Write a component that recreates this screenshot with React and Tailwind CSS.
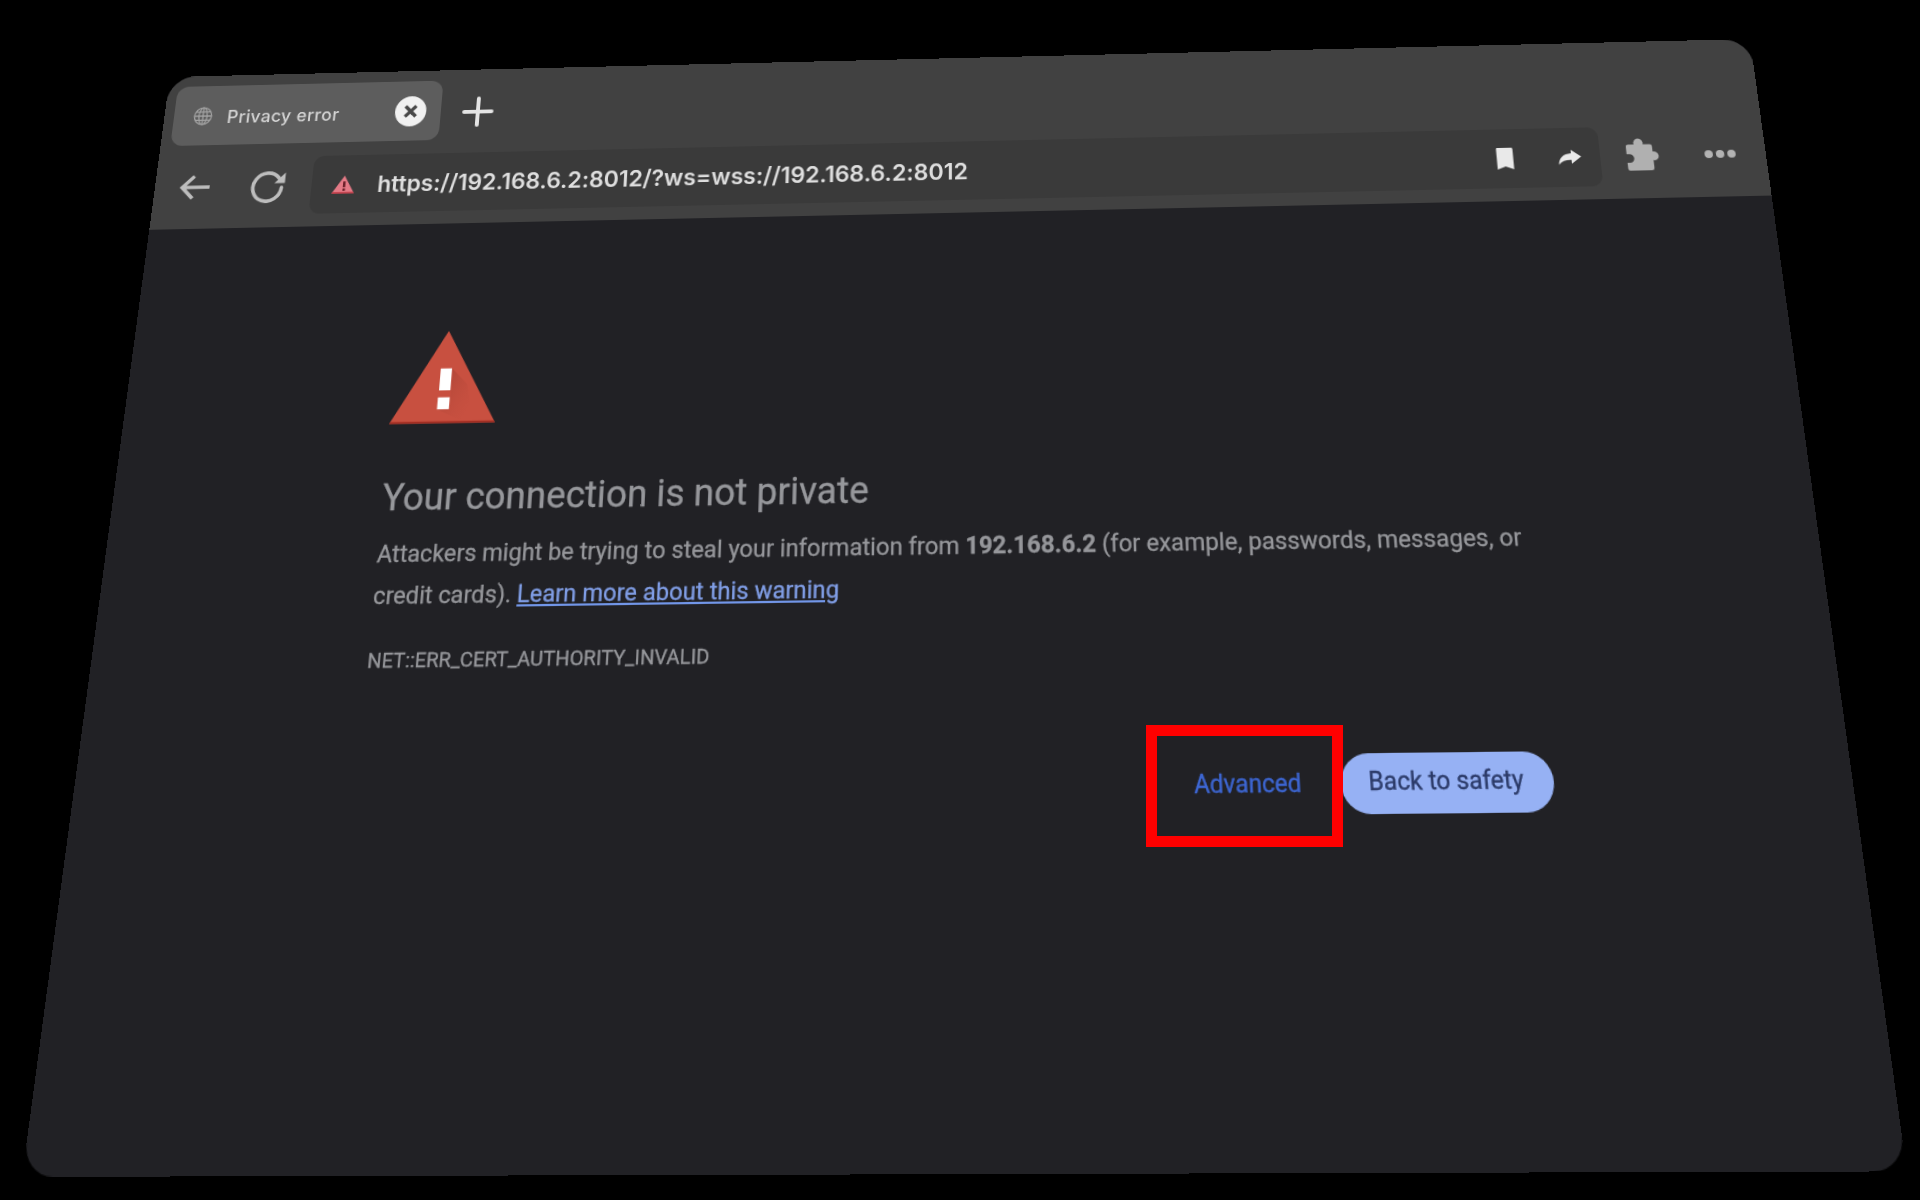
import React from "react";

const PANEL = { width: 1600, height: 1000 };

// Screen position of the panel's corners: top left, top right, bottom right, bottom left.
const CORNERS = [
  [169.8, 77],
  [1750, 39],
  [1907, 1171.5],
  [22, 1177],
];

// Projective transform that takes the flat panel to the four corners.
function perspectiveMatrix({ width, height }, [p0, p1, p2, p3]) {
  const dx1 = p1[0] - p2[0];
  const dx2 = p3[0] - p2[0];
  const sx = p0[0] - p1[0] + p2[0] - p3[0];
  const dy1 = p1[1] - p2[1];
  const dy2 = p3[1] - p2[1];
  const sy = p0[1] - p1[1] + p2[1] - p3[1];
  const den = dx1 * dy2 - dx2 * dy1;
  const g = (sx * dy2 - dx2 * sy) / den;
  const h = (dx1 * sy - sx * dy1) / den;
  const a = (p1[0] - p0[0] + g * p1[0]) / width;
  const b = (p3[0] - p0[0] + h * p3[0]) / height;
  const d = (p1[1] - p0[1] + g * p1[1]) / width;
  const e = (p3[1] - p0[1] + h * p3[1]) / height;
  const values = [a, d, 0, g / width, b, e, 0, h / height, 0, 0, 1, 0, p0[0], p0[1], 0, 1];
  return `matrix3d(${values.map((v) => v.toFixed(10)).join(",")})`;
}

function GlobeIcon() {
  return (
    <svg className="h-5 w-5 shrink-0" viewBox="0 0 20 20" fill="none" stroke="#a3a3a3" strokeWidth="1.3">
      <circle cx="10" cy="10" r="8.8" />
      <ellipse cx="10" cy="10" rx="4.2" ry="8.8" />
      <path d="M10 1.2v17.6M1.2 10h17.6M2.6 5.6h14.8M2.6 14.4h14.8" />
    </svg>
  );
}

function CloseIcon() {
  return (
    <svg className="h-8 w-8 shrink-0" viewBox="0 0 32 32">
      <circle cx="16" cy="16" r="16" fill="#f1f1f1" />
      <path d="M10.5 10.5l11 11M21.5 10.5l-11 11" stroke="#484848" strokeWidth="3.6" />
    </svg>
  );
}

function PlusIcon() {
  return (
    <svg className="h-8 w-8" viewBox="0 0 32 32" stroke="#e4e4e4" strokeWidth="4" strokeLinecap="round">
      <path d="M16 2v28M2 16h28" />
    </svg>
  );
}

function BackIcon() {
  return (
    <svg className="h-[26px] w-8" viewBox="0 0 32 26" fill="none" stroke="#bdbdbd" strokeWidth="3.7">
      <path d="M14.5 1.5L3 13l11.5 11.5M3 13h28" />
    </svg>
  );
}

function ReloadIcon() {
  return (
    <svg className="h-[34px] w-9" viewBox="0 0 36 34">
      <path d="M31.5 18.2A14.6 14.6 0 1 1 28 8" fill="none" stroke="#bdbdbd" strokeWidth="3.7" strokeLinecap="round" />
      <path d="M34.5 2.5V13.5H23.8z" fill="#bdbdbd" />
    </svg>
  );
}

function SmallWarningIcon() {
  return (
    <svg className="h-[19px] w-[23px]" viewBox="0 0 23 19">
      <path d="M12 .3L22.8 18.6H.2z" fill="#e47a86" />
      <path d="M.9 17.2h21.2l.7 1.6H.2z" fill="#c23a45" />
      <path d="M11 6.3h2.5v6H11zM11 13.6h2.5v2.3H11z" fill="#6b2029" />
    </svg>
  );
}

function BookmarkIcon() {
  return (
    <svg className="h-[22px] w-[17px]" viewBox="0 0 17 22" fill="#e9e9e9">
      <path d="M1.6 0h13.6q1.4 0 1.4 1.4V22L8.6 19 .6 22V1.4Q.6 0 1.6 0z" />
    </svg>
  );
}

function ShareIcon() {
  return (
    <svg className="h-4 w-[23px]" viewBox="0 0 23 16" fill="#e9e9e9">
      <path d="M13 .4L22.6 7.6 13 14.8v-4C7.6 10.6 3.6 11.8 .5 15.6 .8 8.6 5.2 4.6 13 4z" />
    </svg>
  );
}

function PuzzleIcon() {
  return (
    <svg className="h-[35px] w-[34px]" viewBox="0 0 34 35" fill="#b0b0b0">
      <path d="M3 7.5H8.6A4.6 4.6 0 1 1 17.4 7.5H24q2.2 0 2.2 2.2V15A4.5 4.5 0 1 1 26.2 23.8V31.5Q26.2 34 23.8 34H3Q.8 34 .8 31.8V26H3.4A4.3 4.3 0 0 0 3.4 17.2H.8V9.7Q.8 7.5 3 7.5z" />
    </svg>
  );
}

function WarningTriangle() {
  return (
    <svg className="block h-[90px] w-[103px]" viewBox="0 0 104 91">
      <defs>
        <linearGradient id="mark-shade" x1="0" y1="0" x2="1" y2="1">
          <stop offset="0" stopColor="#9c3d30" stopOpacity="0.75" />
          <stop offset="1" stopColor="#c85040" stopOpacity="0" />
        </linearGradient>
      </defs>
      <path d="M51.5 0L104 90.5H0z" fill="#c85040" />
      <path d="M58 37.5L74 53 78 72 70 88 46 77 58 77z" fill="url(#mark-shade)" />
      <path d="M1.2 88.8h101.8l1 1.7H0z" fill="#a32d22" />
      <path d="M46.5 37.2h11.2v21.4H46.5zM46 65.5h11.7V77H46z" fill="#ffffff" />
    </svg>
  );
}

function TabStrip() {
  return (
    <div className="flex items-center pl-[10px] pt-[11px]">
      <div className="flex h-[63px] w-[275px] items-center rounded-xl bg-[#5d5d5d] pl-5 pr-[15px]">
        <GlobeIcon />
        <span className="ml-[15px] mt-[3px] flex-1 whitespace-nowrap text-[18px] font-medium tracking-[0.35px] text-[#d6d6d6]">
          Privacy error
        </span>
        <CloseIcon />
      </div>
      <div className="ml-[22px] mt-[5px]">
        <PlusIcon />
      </div>
    </div>
  );
}

function Toolbar() {
  return (
    <div className="mt-[14px] flex h-[60px] items-center pl-[25px]">
      <BackIcon />
      <div className="ml-[41px] mt-[2px]">
        <ReloadIcon />
      </div>
      <div className="ml-[26px] flex h-[60px] w-[1280px] items-center rounded-[11px] bg-[#3a3a3a] pl-[21px] pr-[18px]">
        <SmallWarningIcon />
        <span className="ml-[23px] mt-[2px] flex-1 whitespace-nowrap text-[23.1px] font-semibold tracking-[-0.03px] text-[#dedede]">
          https://192.168.6.2:8012/?ws=wss://192.168.6.2:8012
        </span>
        <BookmarkIcon />
        <div className="ml-[43px]">
          <ShareIcon />
        </div>
      </div>
      <div className="mb-[3px] ml-[25px]">
        <PuzzleIcon />
      </div>
      <div className="ml-[42px] flex gap-[3px]">
        <span className="h-2 w-2 rounded-full bg-[#b3b3b3]" />
        <span className="h-2 w-2 rounded-full bg-[#b3b3b3]" />
        <span className="h-2 w-2 rounded-full bg-[#b3b3b3]" />
      </div>
    </div>
  );
}

function PrivacyError() {
  return (
    <main className="w-[1339px] pl-[261px] pt-[108px] font-[Roboto,sans-serif] text-[#96979b]">
      <WarningTriangle />
      <h1 className="mt-[48px] text-[35.2px] leading-[42px] [-webkit-text-stroke:0.3px]">Your connection is not private</h1>
      <p className="mt-[12px] whitespace-nowrap text-[22.3px] leading-[38px] [-webkit-text-stroke:0.3px]">
        Attackers might be trying to steal your information from{" "}
        <b className="font-bold">192.168.6.2</b> (for example, passwords, messages, or
        <br />
        credit cards).{" "}
        <a className="text-[#809ee6] underline decoration-[#7296e8] decoration-2 underline-offset-2">
          Learn more about this warning
        </a>
      </p>
      <p className="mt-[28px] text-[18.8px] leading-6 [-webkit-text-stroke:0.3px]">NET::ERR_CERT_AUTHORITY_INVALID</p>
      <div className="mt-[78px] flex h-[51px] items-center justify-end gap-[35px] text-[21.7px] [-webkit-text-stroke:0.3px]">
        <button className="text-[#3d66d2]">Advanced</button>
        <button className="h-[51px] w-[188px] rounded-full bg-[#96b1f4] pb-[2px] pr-[2px] text-[#2b3a68]">Back to safety</button>
      </div>
    </main>
  );
}

export default function App() {
  return (
    <div className="relative h-[1200px] w-[1920px] overflow-hidden bg-black font-[Inter,sans-serif]">
      <div
        className="h-[1000px] w-[1600px] origin-top-left overflow-hidden rounded-[27px] bg-[#212125]"
        style={{ transform: perspectiveMatrix(PANEL, CORNERS) }}
      >
        <header className="h-[161px] bg-[#414141]">
          <TabStrip />
          <Toolbar />
        </header>
        <PrivacyError />
      </div>
      <div className="absolute left-[1146px] top-[725px] h-[122px] w-[197px] border-[11px] border-[#ff0000]" />
    </div>
  );
}
